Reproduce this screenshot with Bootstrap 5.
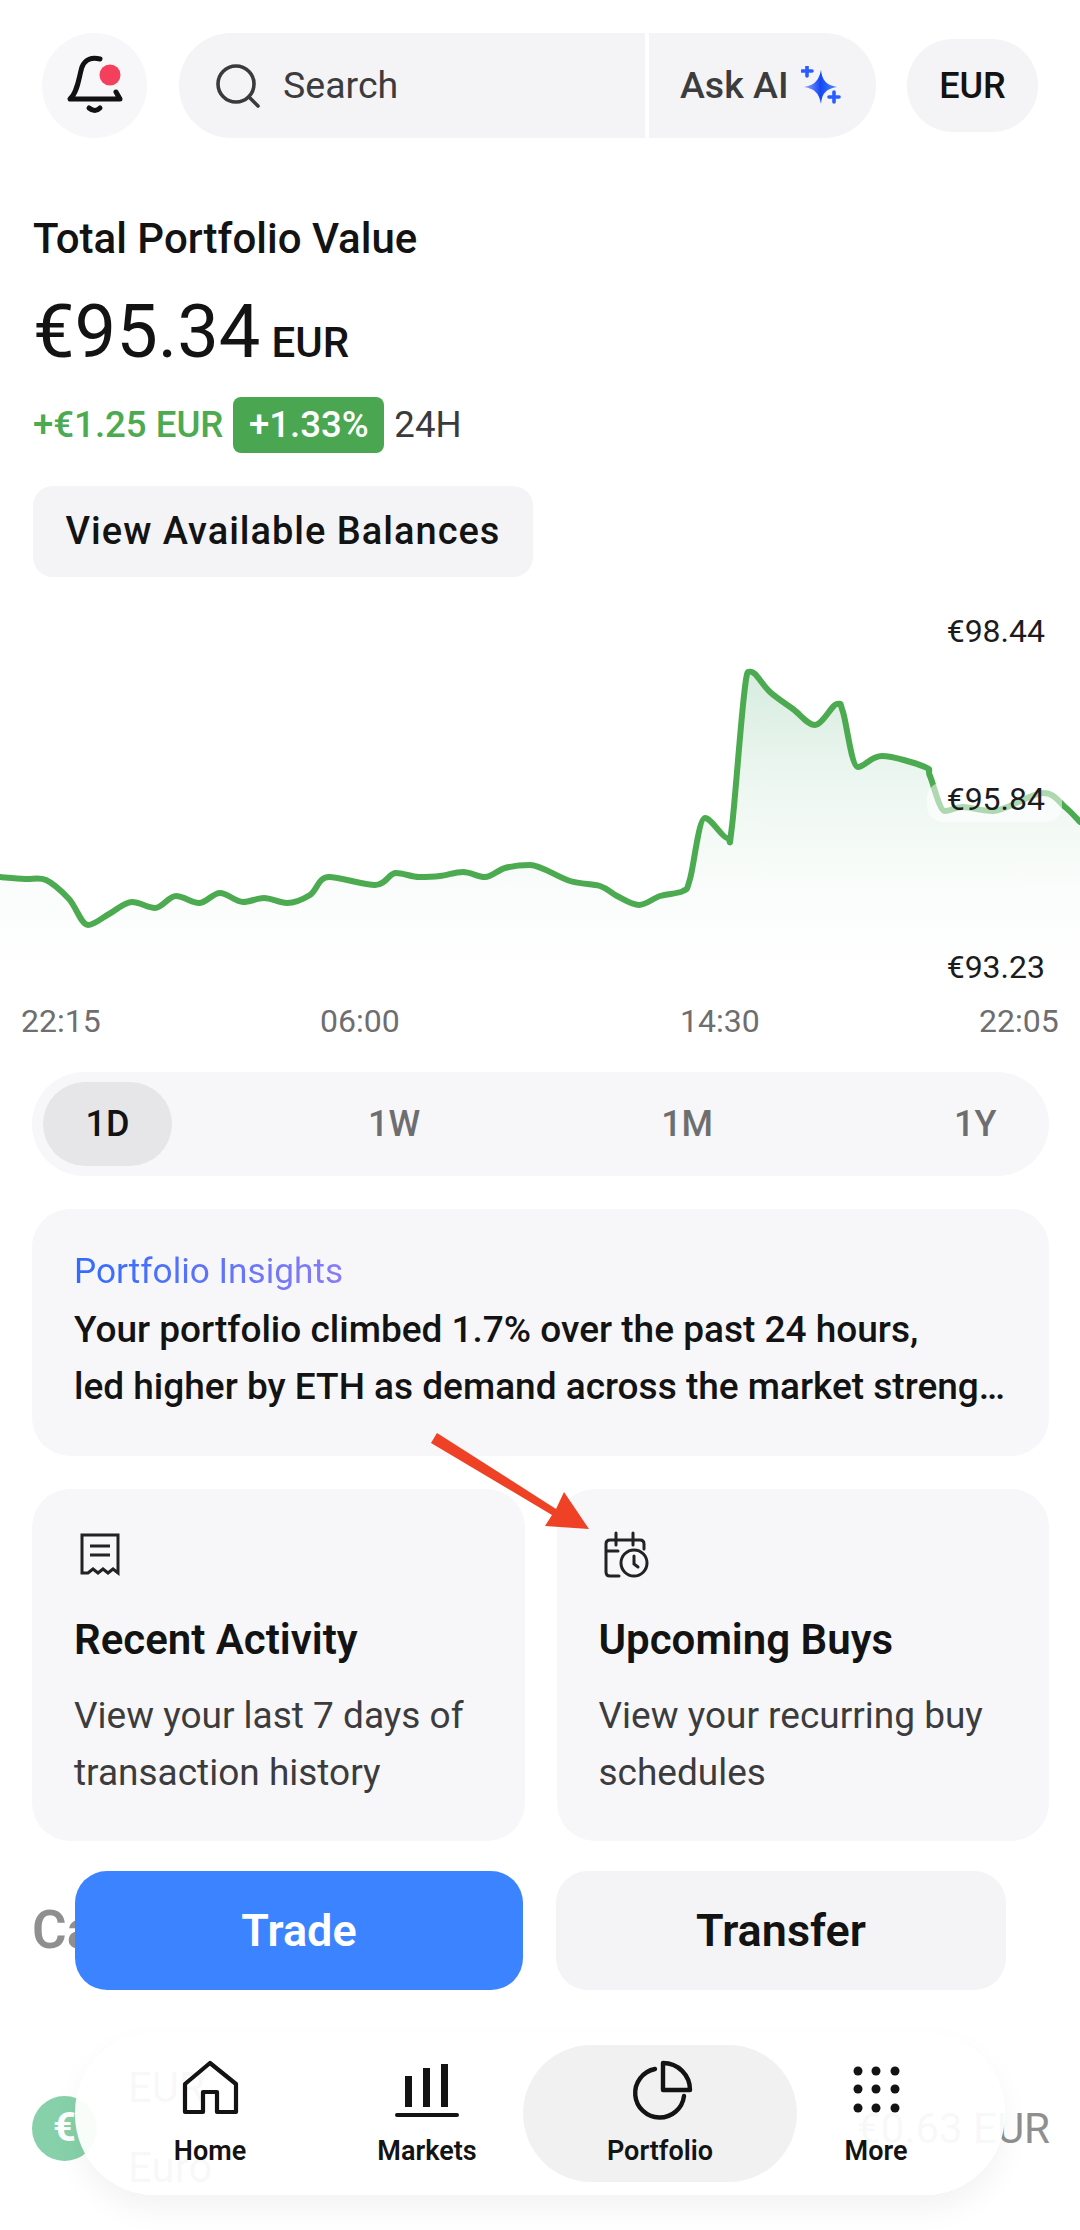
<!DOCTYPE html>
<html lang="en">
<head>
    <meta charset="UTF-8">
    <meta name="viewport" content="width=device-width, initial-scale=1.0">
    <title>Portfolio</title>
    <link rel="stylesheet" href="https://cdn.jsdelivr.net/npm/bootstrap@5.3.2/dist/css/bootstrap.min.css">
    <style>
        body { background: #fff; font-family: Roboto, "Liberation Sans", sans-serif; color: #131313; width: 1080px; height: 2230px; overflow: hidden; position: relative; }
        .topbar { padding: 33px 0 0 42px; height: 138px; }
        .bell-btn { width: 105px; height: 105px; border-radius: 50%; background: #f7f7f9; }
        .search-box { width: 466px; height: 105px; margin-left: 32px; background: #f4f4f6; border-radius: 52px 0 0 52px; padding-left: 36px; font-size: 37.500px; color: #3c3c3e; gap: 22px; }
        .ask-box { width: 227px; height: 105px; margin-left: 4px; background: #f4f4f6; border-radius: 0 52px 52px 0; padding-left: 31px; font-size: 37.500px; font-weight: 500; color: #3c3c3e; gap: 12px; }
        .cur-btn { width: 131px; height: 93px; margin: 6px 0 0 31px; background: #f4f4f6; border-radius: 46px; font-size: 36px; font-weight: 500; }
        .page-body { padding: 0 31px 0 33px; }
        .total-label { margin-top: 75px; font-size: 42px; font-weight: 500; line-height: 52px; }
        .total-row { height: 97px; line-height: 97px; margin-top: 18px; }
        .total-num { font-size: 74px; }
        .total-cur { font-size: 42px; font-weight: 500; margin-left: 11px; }
        .change-row { height: 56px; margin-top: 17px; font-size: 36.600px; font-weight: 500; gap: 10px; }
        .up-text { color: #4caa50; }
        .up-pill { background: #4ba651; color: #fff; width: 151px; height: 56px; border-radius: 8px; }
        .h24 { font-weight: 400; color: #3a3a3c; }
        .bal-btn { width: 500px; height: 91px; margin-top: 33px; background: #f4f4f6; border-radius: 20px; font-size: 38px; font-weight: 500; letter-spacing: 1px; }
        .chart-wrap { position: relative; height: 473px; margin-top: 22px; }
        .chart-svg { display: block; width: 1080px; height: 400px; }
        .ylab { position: absolute; right: 35px; font-size: 32px; line-height: 36px; color: #1c1c1e; }
        .yhi { top: 14px; } .ymid { top: 182px; } .ylo { top: 350px; }
        .ymask { position: absolute; left: 927px; top: 183px; width: 135px; height: 40px; border-radius: 16px; background: rgba(255,255,255,.55); }
        .xlabs { height: 48px; padding-left: 21px; font-size: 32px; color: #6e6e70; line-height: 44px; }
        .xlabs span { width: 84px; white-space: nowrap; }
        .xlabs span:nth-child(1) { margin-right: 215px; }
        .xlabs span:nth-child(2) { margin-right: 276px; }
        .xlabs span:nth-child(3) { margin-right: 215px; }
        .range-bar { margin-left: 32px; width: 1017px; height: 104px; background: #f7f7f9; border-radius: 52px; font-size: 36px; font-weight: 500; color: #6e6e70; padding-left: 11px; }
        .range-on { width: 129px; height: 84px; border-radius: 42px; background: #e6e6e8; color: #131313; }
        .range-bar .r1w { margin-left: 196px; } .range-bar .r1m { margin-left: 241px; } .range-bar .r1y { margin-left: 241px; }
        .insight-box { margin: 33px 0 0 32px; width: 1017px; height: 247px; background: #f7f7f9; border-radius: 38px; padding: 40px 0 0 42px; }
        .insight-ttl { font-size: 35.200px; line-height: 44px; background: linear-gradient(90deg, #2f6bff, #8a7cf5); -webkit-background-clip: text; background-clip: text; color: transparent; display: inline-block; }
        .insight-txt { font-size: 37px; font-weight: 500; line-height: 57px; margin-top: 8px; white-space: nowrap; }
        .tile-row { margin: 33px 0 0 32px; width: 1017px; gap: 32px; }
        .tile { flex: 1 1 0; height: 352px; background: #f7f7f9; border-radius: 38px; padding: 42px 0 0 42px; }
        .tile-ico { display: block; width: 50px; height: 50px; margin-left: 1px; }
        .tile-ttl { font-size: 42px; font-weight: 600; line-height: 50px; margin-top: 34px; }
        .tile-txt { font-size: 37px; line-height: 57px; margin-top: 22px; color: #3c3c3e; }
        .cash-ttl { margin: 54px 0 0 32px; font-size: 53px; font-weight: 600; line-height: 70px; color: #8f8f8f; }
        .coin-row { margin: 113px 0 0 32px; width: 1018px; height: 100px; }
        .coin { width: 65px; height: 65px; border-radius: 50%; background: #86d1aa; color: #fff; font-size: 40px; font-weight: 700; }
        .coin-name { margin-left: 31px; font-size: 42px; line-height: 80px; color: #8f8f8f; }
        .coin-amt { font-size: 42px; color: #8f8f8f; margin-left: auto; }
        .action-row { position: absolute; left: 75px; top: 1871px; gap: 33px; }
        .act-btn { width: 448px; height: 119px; border-radius: 32px; font-size: 45px; font-weight: 600; }
        .act-blue { background: #3c84ff; color: #fff; }
        .act-grey { background: #f4f4f6; color: #131313; width: 450px; }
        .tabbar { position: absolute; left: 75px; top: 2032px; width: 930px; height: 163px; background: rgba(255,255,255,.94); border-radius: 80px; box-shadow: 0 14px 30px rgba(0,0,0,.05); padding: 13px 0 0 8px; }
        .tab-item { height: 137px; font-size: 27px; font-weight: 600; color: #131313; padding-top: 11px; }
        .tab-item svg { display: block; width: 80px; height: 70px; }
        .tab-item span { line-height: 32px; margin-top: 9px; }
        .t-home { width: 254px; } .t-mkt { width: 180px; margin-right: 6px; }
        .t-port { width: 274px; background: #f1f1f2; border-radius: 69px; } .t-more { width: 158px; }
        .arrow-svg { position: absolute; left: 0; top: 0; width: 1080px; height: 2230px; pointer-events: none; }
    </style>
</head>
<body>

<div class="topbar d-flex">
    <div class="bell-btn">
        <svg width="105" height="105" viewBox="42 33 105 105" fill="none" stroke="#111" stroke-width="5" stroke-linecap="round" stroke-linejoin="round">
            <path d="M100 59C92 57 85 59 82 67C79 76 78 92 70 99H120L116 92"/>
            <path d="M89 108Q95 113 100 108" stroke-width="5"/>
            <circle cx="110" cy="75" r="10.500" fill="#f4405d" stroke="none"/>
        </svg>
    </div>
    <div class="search-box d-flex align-items-center">
        <svg width="46" height="46" viewBox="0 0 46 46" fill="none" stroke="#3a3a3c" stroke-width="3.600" stroke-linecap="round"><circle cx="21" cy="21" r="18"/><path d="M34 34l9 9"/></svg>
        <span>Search</span>
    </div>
    <div class="ask-box d-flex align-items-center">
        <span>Ask AI</span>
        <svg width="40" height="40" viewBox="0 0 40 40">
            <defs><linearGradient id="spk" x1="0" x2="1" y1="0" y2="0"><stop offset="0" stop-color="#9aa8ff"/><stop offset=".5" stop-color="#1448f5"/><stop offset="1" stop-color="#4b8bff"/></linearGradient></defs>
            <path d="M20 4C21 14 25 19 36 21C25 23 21 27 20 38C18 27 14 23 3 21C14 19 18 14 20 4Z" fill="url(#spk)"/>
            <path d="M6 0v10M1 5h10M33 26v10M28 31h10" stroke="#2a5cff" stroke-width="3.600" stroke-linecap="round"/>
        </svg>
    </div>
    <div class="cur-btn d-flex align-items-center justify-content-center">EUR</div>
</div>

<div class="page-body">
    <div class="total-label">Total Portfolio Value</div>
    <div class="total-row"><span class="total-num">€95.34</span><span class="total-cur">EUR</span></div>
    <div class="change-row d-flex align-items-center">
        <span class="up-text">+€1.25 EUR</span>
        <span class="up-pill d-flex align-items-center justify-content-center">+1.33%</span>
        <span class="h24">24H</span>
    </div>
    <div class="bal-btn d-flex align-items-center justify-content-center">View Available Balances</div>
</div>

<div class="chart-wrap">
    <svg class="chart-svg" viewBox="0 600 1080 400">
        <defs><linearGradient id="fillg" gradientUnits="userSpaceOnUse" x1="0" x2="0" y1="673" y2="975"><stop offset="0" stop-color="#4caa70" stop-opacity=".22"/><stop offset=".4" stop-color="#4caa70" stop-opacity=".09"/><stop offset=".75" stop-color="#4caa70" stop-opacity=".025"/><stop offset="1" stop-color="#4caa70" stop-opacity="0"/></linearGradient></defs>
        <path id="areaPath" fill="url(#fillg)"/>
        <path id="linePath" fill="none" stroke="#4caa50" stroke-width="6" stroke-linejoin="round" stroke-linecap="round"/>
    </svg>
    <div class="ymask"></div>
    <div class="ylab yhi">€98.44</div>
    <div class="ylab ymid">€95.84</div>
    <div class="ylab ylo">€93.23</div>
    <div class="xlabs d-flex">
        <span>22:15</span><span>06:00</span><span>14:30</span><span>22:05</span>
    </div>
</div>

<div class="range-bar d-flex align-items-center">
    <div class="range-on d-flex align-items-center justify-content-center">1D</div>
    <span class="r1w">1W</span><span class="r1m">1M</span><span class="r1y">1Y</span>
</div>

<div class="insight-box">
    <div class="insight-ttl">Portfolio Insights</div>
    <div class="insight-txt">Your portfolio climbed 1.7% over the past 24 hours,<br>led higher by ETH as demand across the market streng…</div>
</div>

<div class="tile-row d-flex">
    <div class="tile">
        <svg class="tile-ico" viewBox="75 1534 50 50" fill="none" stroke="#222" stroke-width="3"><path d="M82 1576V1538H118V1576L113 1572L108 1576L103 1572L98 1576L93 1572L88 1576Z"/><path d="M90 1549H110M90 1558H110"/></svg>
        <div class="tile-ttl">Recent Activity</div>
        <div class="tile-txt">View your last 7 days of<br>transaction history</div>
    </div>
    <div class="tile">
        <svg class="tile-ico" viewBox="599 1532 50 50" fill="none" stroke="#222" stroke-width="3" stroke-linecap="round"><path d="M618 1577H609Q605 1577 605 1573V1545Q605 1541 609 1541H639Q643 1541 643 1545V1550M605 1552H617M615 1534V1546M632 1534V1546"/><circle cx="633" cy="1564" r="13"/><path d="M633 1557V1565L637 1568"/></svg>
        <div class="tile-ttl">Upcoming Buys</div>
        <div class="tile-txt">View your recurring buy<br>schedules</div>
    </div>
</div>

<div class="cash-ttl">Cash</div>
<div class="coin-row d-flex align-items-center">
    <div class="coin d-flex align-items-center justify-content-center">€</div>
    <div class="coin-name"><div>EUR</div><div>Euro</div></div>
    <span class="coin-amt">€0.63 EUR</span>
</div>

<svg class="arrow-svg" viewBox="0 0 1080 2230">
    <path d="M431 1443L437 1433L556 1509L564 1492L589 1529L545 1526L552 1515Z" fill="#ee4125"/>
</svg>

<div class="action-row d-flex">
    <div class="act-btn act-blue d-flex align-items-center justify-content-center">Trade</div>
    <div class="act-btn act-grey d-flex align-items-center justify-content-center">Transfer</div>
</div>

<div class="tabbar d-flex">
    <div class="tab-item t-home d-flex flex-column align-items-center">
        <svg viewBox="170 2056 80 70" fill="none" stroke="#131313" stroke-width="4.200" stroke-linejoin="round"><path d="M210 2063L236 2084V2112H217V2092H203V2112H185V2084Z"/></svg>
        <span>Home</span>
    </div>
    <div class="tab-item t-mkt d-flex flex-column align-items-center">
        <svg viewBox="388 2056 80 70"><path d="M406 2076h7v31h-7zM424 2068h7v39h-7zM442 2064h7v43h-7z" fill="#131313"/><path d="M398 2115H458" stroke="#131313" stroke-width="4" stroke-linecap="round"/></svg>
        <span>Markets</span>
    </div>
    <div class="tab-item t-port d-flex flex-column align-items-center">
        <svg viewBox="620 2056 80 70" fill="none" stroke="#131313" stroke-width="4.400" stroke-linecap="round" stroke-linejoin="round"><path d="M655 2069A24.500 24.500 0 1 0 684 2096"/><path d="M663 2063V2090H690C690 2075 678 2063 663 2063Z"/></svg>
        <span>Portfolio</span>
    </div>
    <div class="tab-item t-more d-flex flex-column align-items-center">
        <svg viewBox="836 2056 80 70" fill="#131313"><circle cx="858" cy="2071" r="4.500"/><circle cx="876" cy="2071" r="4.500"/><circle cx="895" cy="2071" r="4.500"/><circle cx="858" cy="2089" r="4.500"/><circle cx="876" cy="2089" r="4.500"/><circle cx="895" cy="2089" r="4.500"/><circle cx="858" cy="2108" r="4.500"/><circle cx="876" cy="2108" r="4.500"/><circle cx="895" cy="2108" r="4.500"/></svg>
        <span>More</span>
    </div>
</div>

<script>
    // chart points read off the picture
    const pts = [[0,878],[25,880],[46,881],[69,900],[88,926],[109,915],[132,903],[155,909],[176,897],[199,904],[220,894],[243,903],[264,899],[287,904],[310,896],[329,878],[375,886],[396,874],[419,878],[440,877],[463,873],[485,878],[505,869],[530,866],[570,882],[600,887],[617,897],[639,906],[660,897],[683,892],[690,880],[705,819],[727,839],[732,827],[748,673],[755,675],[770,693],[793,710],[815,726],[837,705],[843,713],[858,768],[882,757],[925,768],[930,777],[945,812],[963,808],[993,812],[1043,794],[1065,808],[1080,823]];

    // tangent at point i, flat on peaks and dips so the curve does not overshoot
    function tangent(i) {
        const a = pts[Math.max(i - 1, 0)], b = pts[i], c = pts[Math.min(i + 1, pts.length - 1)];
        const flat = (b[1] - a[1]) * (c[1] - b[1]) < 0;
        return [(c[0] - a[0]) / 6, flat ? 0 : (c[1] - a[1]) / 6];
    }

    let d = "M" + pts[0].join(" ");
    for (let i = 0; i < pts.length - 1; i++) {
        const t1 = tangent(i), t2 = tangent(i + 1), p1 = pts[i], p2 = pts[i + 1];
        d += " C" + (p1[0] + t1[0]) + " " + (p1[1] + t1[1]) + " " + (p2[0] - t2[0]) + " " + (p2[1] - t2[1]) + " " + p2.join(" ");
    }
    document.getElementById("linePath").setAttribute("d", d);
    document.getElementById("areaPath").setAttribute("d", d + " V1000 H0 Z");
</script>
<script src="https://cdn.jsdelivr.net/npm/bootstrap@5.3.2/dist/js/bootstrap.bundle.min.js"></script>
</body>
</html>
